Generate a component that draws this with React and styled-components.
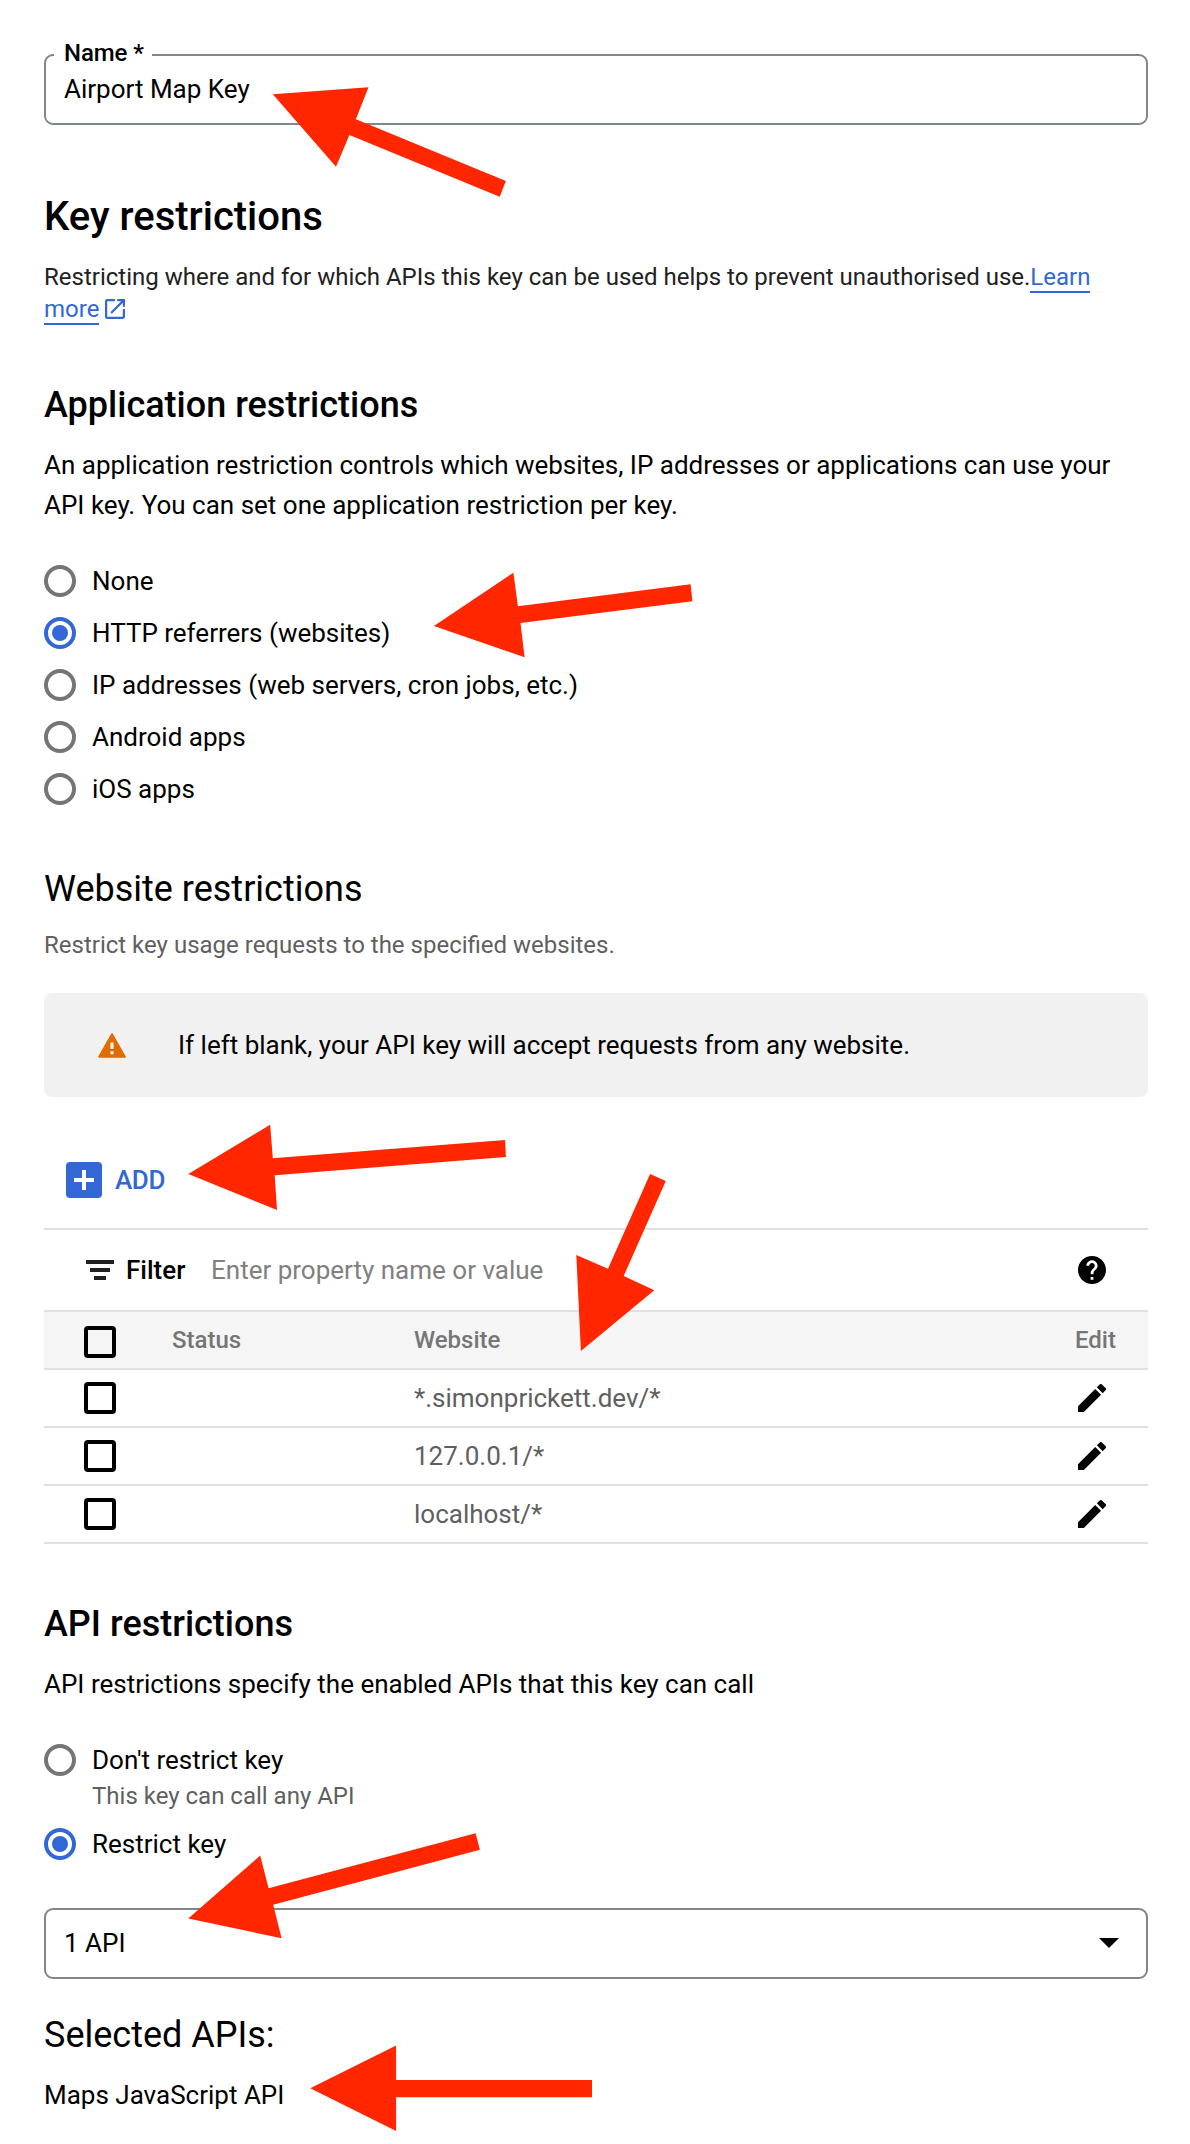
import React from 'react';
import styled, { createGlobalStyle } from 'styled-components';

const GlobalStyle = createGlobalStyle`
  * { box-sizing: border-box; }
  body { margin: 0; background: #fff; }
`;

const Page = styled.main`
  position: relative;
  width: 1190px;
  height: 2144px;
  overflow: hidden;
  padding: 54px 42px 0 44px;
  font-family: Roboto, "Liberation Sans", sans-serif;
  font-size: 26px;
  line-height: 40px;
  color: #000;
  background: #fff;
`;

const Field = styled.div`
  position: relative;
  display: flex;
  justify-content: space-between;
  height: 71px;
  padding: 13px 27px 0 18px;
  border: 2px solid #80868b;
  border-radius: 9px;
`;

const FieldLabel = styled.label`
  position: absolute;
  top: -17px;
  left: 8px;
  padding: 0 8px 0 10px;
  background: #fff;
  font-size: 24px;
  font-weight: 500;
  line-height: 28px;
  letter-spacing: -0.1px;
`;

const CaretIcon = styled.svg`
  width: 20px;
  height: 10px;
  margin-top: 15px;
`;

const Title = styled.h1`
  margin: 68px 0 21px;
  font-size: 40px;
  font-weight: 500;
  line-height: 47px;
`;

const Heading = styled.h2`
  margin: ${(p) => p.$top}px 0 19px;
  font-size: 36px;
  font-weight: ${(p) => (p.$light ? 400 : 500)};
  line-height: 42px;
`;

const Text = styled.p`
  margin: 0;
`;

const Note = styled.p`
  margin: 0;
  font-size: 24px;
  line-height: 32px;
  color: ${(p) => (p.$muted ? '#5f5f5f' : '#212121')};
`;

const Link = styled.a`
  color: #3367d6;
`;

const LinkWord = styled.span`
  border-bottom: 2px solid #3367d6;
`;

const LinkIcon = styled.svg`
  width: 20px;
  height: 20px;
  margin-left: 6px;
  vertical-align: -2px;
`;

const RadioGroup = styled.div`
  display: flex;
  flex-direction: column;
  margin-top: 30px;
`;

const RadioRow = styled.label`
  display: flex;
  align-items: center;
  gap: 16px;
  height: 52px;
`;

const RadioMark = styled.span`
  display: grid;
  place-items: center;
  width: 32px;
  height: 32px;
  border: 4px solid ${(p) => (p.$checked ? '#3367d6' : '#757575')};
  border-radius: 50%;

  &::after {
    content: '';
    width: 16px;
    height: 16px;
    border-radius: 50%;
    background: ${(p) => (p.$checked ? '#3367d6' : 'transparent')};
  }
`;

const RadioHint = styled(Note)`
  margin: -6px 0 6px 48px;
`;

const Alert = styled.div`
  display: flex;
  align-items: center;
  height: 104px;
  margin-top: 32px;
  padding-left: 54px;
  border-radius: 8px;
  background: #f1f1f1;
`;

const AlertIcon = styled.svg`
  width: 28px;
  height: 25px;
  margin-right: 52px;
`;

const AddButton = styled.button`
  display: flex;
  gap: 13px;
  margin: 65px 0 30px 22px;
  padding: 0;
  border: 0;
  background: none;
  color: #3367d6;
  font: 500 26px/36px Roboto, "Liberation Sans", sans-serif;
  letter-spacing: -0.4px;
`;

const AddIcon = styled.svg`
  width: 36px;
  height: 36px;
`;

const Table = styled.section`
  border-top: 2px solid #e0e0e0;
`;

const FilterBar = styled.div`
  display: grid;
  grid-template-columns: 40px 85px 1fr 70px;
  align-items: center;
  height: 82px;
  padding-left: 42px;
  border-bottom: 2px solid #e0e0e0;
`;

const FilterIcon = styled.svg`
  width: 28px;
  height: 20px;
`;

const FilterName = styled.span`
  font-weight: 500;
`;

const Placeholder = styled.span`
  color: #808080;
`;

const RoundIcon = styled.svg`
  display: block;
  width: 28px;
  height: 28px;
`;

const Row = styled.div`
  display: grid;
  grid-template-columns: 88px 242px 1fr 73px;
  align-items: center;
  height: 58px;
  padding-left: 40px;
  border-bottom: 2px solid #e0e0e0;
  color: ${(p) => (p.$head ? '#757575' : '#5f5f5f')};
  background: ${(p) => (p.$head ? '#f5f5f5' : '#fff')};
  font-size: ${(p) => (p.$head ? 24 : 26)}px;
  font-weight: ${(p) => (p.$head ? 500 : 400)};
  line-height: ${(p) => (p.$head ? 28 : 30)}px;
`;

const Checkbox = styled.span`
  width: 32px;
  height: 32px;
  margin-top: ${(p) => (p.$head ? 4 : 0)}px;
  border: 4px solid #000;
  border-radius: 4px;
`;

const EditButton = styled.button`
  margin: 0 0 0 3px;
  padding: 0;
  border: 0;
  background: none;
  color: #000;
`;

const Select = styled(Field)`
  margin-top: 38px;
`;

const Overlay = styled.svg`
  position: absolute;
  top: 0;
  left: 0;
  width: 1190px;
  height: 2144px;
  pointer-events: none;
`;

const referrerOptions = [
  'None',
  'HTTP referrers (websites)',
  'IP addresses (web servers, cron jobs, etc.)',
  'Android apps',
  'iOS apps',
];

const websites = ['*.simonprickett.dev/*', '127.0.0.1/*', 'localhost/*'];

const arrows = [
  '272.8,94.3 368.5,87.3 355.9,119.3 505.9,181 499.7,196.7 349.4,135 336,166.7',
  '433.9,626 513.4,572.7 517.9,606.3 690.6,584.3 692.4,601.3 520.5,623 524.6,657.3',
  '188.3,1174 270.2,1124.7 272.8,1158.3 505.1,1140 505.9,1157 274.7,1175.3 277,1210',
  '580.9,1351 576.3,1255 608,1268.7 650.1,1174 665.8,1181 623.7,1276 654.3,1290.3',
  '188.3,1918.5 260.2,1855.5 268.6,1888.3 475.6,1833.2 479.9,1849.8 273.2,1904.8 281.6,1938.3',
  '310.3,2088.3 396.1,2045.5 396.1,2080 592,2080 592,2097.3 396.1,2097.3 396.1,2131',
];

function Radio({ label, checked }) {
  return (
    <RadioRow>
      <RadioMark $checked={checked} />
      {label}
    </RadioRow>
  );
}

export default function App() {
  return (
    <Page>
      <GlobalStyle />
      <Field>
        <FieldLabel>Name *</FieldLabel>
        Airport Map Key
      </Field>

      <Title>Key restrictions</Title>
      <Note>
        Restricting where and for which APIs this key can be used helps to prevent unauthorised use.
        <Link>
          <LinkWord>Learn</LinkWord> <LinkWord>more</LinkWord>
        </Link>
        <LinkIcon viewBox="3 3 18 18" preserveAspectRatio="none" fill="#3367d6">
          <path d="M19 19H5V5h7V3H5a2 2 0 0 0-2 2v14a2 2 0 0 0 2 2h14c1.1 0 2-.9 2-2v-7h-2v7zM14 3v2h3.59l-9.83 9.83 1.41 1.41L19 6.41V10h2V3h-7z" />
        </LinkIcon>
      </Note>

      <Heading $top={59}>Application restrictions</Heading>
      <Text>
        An application restriction controls which websites, IP addresses or applications can use your
        API key. You can set one application restriction per key.
      </Text>
      <RadioGroup>
        {referrerOptions.map((label, i) => (
          <Radio key={label} label={label} checked={i === 1} />
        ))}
      </RadioGroup>

      <Heading $top={53} $light>Website restrictions</Heading>
      <Note $muted>Restrict key usage requests to the specified websites.</Note>
      <Alert>
        <AlertIcon viewBox="0 0 28 25">
          <path d="M14 1.2 26.8 23.8H1.2z" fill="#e06c00" stroke="#e06c00" strokeWidth="2" strokeLinejoin="round" />
          <path d="M12.4 9.6h3.2v6.4h-3.2zM12.4 18.2h3.2v3h-3.2z" fill="#f1f1f1" />
        </AlertIcon>
        If left blank, your API key will accept requests from any website.
      </Alert>

      <AddButton>
        <AddIcon viewBox="0 0 36 36">
          <rect width="36" height="36" rx="4" fill="#3367d6" />
          <path d="M16 8h4v8h8v4h-8v8h-4v-8H8v-4h8z" fill="#fff" />
        </AddIcon>
        ADD
      </AddButton>

      <Table>
        <FilterBar>
          <FilterIcon viewBox="0 0 28 20" fill="#212121">
            <path d="M0 0h28v4H0zM4 8h20v4H4zM8 16h12v4H8z" />
          </FilterIcon>
          <FilterName>Filter</FilterName>
          <Placeholder>Enter property name or value</Placeholder>
          <RoundIcon viewBox="2 2 20 20">
            <path d="M12 2C6.48 2 2 6.48 2 12s4.48 10 10 10 10-4.48 10-10S17.52 2 12 2zm1 17h-2v-2h2v2zm2.07-7.75l-.9.92C13.45 12.9 13 13.5 13 15h-2v-.5c0-1.1.45-2.1 1.17-2.83l1.24-1.26c.37-.36.59-.86.59-1.41 0-1.1-.9-2-2-2s-2 .9-2 2H8c0-2.21 1.79-4 4-4s4 1.79 4 4c0 .88-.36 1.68-.93 2.25z" />
          </RoundIcon>
        </FilterBar>
        <Row $head>
          <Checkbox $head />
          <span>Status</span>
          <span>Website</span>
          <span>Edit</span>
        </Row>
        {websites.map((site) => (
          <Row key={site}>
            <Checkbox />
            <span />
            <span>{site}</span>
            <EditButton>
              <RoundIcon viewBox="3 3 18 18">
                <path d="M3 17.25V21h3.75L17.81 9.94l-3.75-3.75L3 17.25zM20.71 7.04a1 1 0 0 0 0-1.41l-2.34-2.34a1 1 0 0 0-1.41 0l-1.83 1.83 3.75 3.75 1.83-1.83z" />
              </RoundIcon>
            </EditButton>
          </Row>
        ))}
      </Table>

      <Heading $top={59}>API restrictions</Heading>
      <Text>API restrictions specify the enabled APIs that this key can call</Text>
      <RadioGroup>
        <Radio label="Don't restrict key" />
        <RadioHint $muted>This key can call any API</RadioHint>
        <Radio label="Restrict key" checked />
      </RadioGroup>
      <Select>
        1 API
        <CaretIcon viewBox="0 0 20 10">
          <path d="M0 0h20L10 10z" />
        </CaretIcon>
      </Select>

      <Heading $top={35} $light>Selected APIs:</Heading>
      <Text>Maps JavaScript API</Text>

      <Overlay viewBox="0 0 1190 2144" fill="#ff2600">
        {arrows.map((points) => (
          <polygon key={points} points={points} />
        ))}
      </Overlay>
    </Page>
  );
}
